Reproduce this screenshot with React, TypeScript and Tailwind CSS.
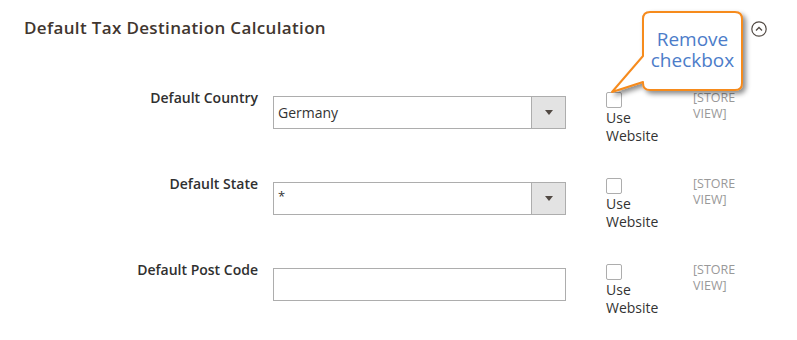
const rows = [
  { label: "Default Country", kind: "select", value: "Germany" },
  { label: "Default State", kind: "select", value: "*" },
  { label: "Default Post Code", kind: "input", value: "" },
];

const Dropdown = ({ value }: { value: string }) => (
  <div className="flex h-[33px] w-[293px] border border-[#adadad] bg-white">
    <div className="flex flex-1 items-center pl-[4px] text-[14px] text-[#333]">
      {value === "*" ? <span className="text-[13px] leading-none -mt-[4px]">*</span> : value}
    </div>
    <div className="flex w-[34px] items-center justify-center border-l border-[#adadad] bg-[#e3e3e3]">
      <svg width="8" height="5" viewBox="0 0 8 5">
        <path d="M0 0 H8 L4 5 Z" fill="#514943" />
      </svg>
    </div>
  </div>
);

const Callout = () => (
  <>
    <svg
      className="absolute left-0 top-0 pointer-events-none"
      width="797"
      height="120"
      viewBox="0 0 797 120"
    >
      <defs>
        <filter id="sh" x="-20%" y="-20%" width="150%" height="150%">
          <feDropShadow dx="3" dy="3" stdDeviation="2.5" floodColor="#000" floodOpacity="0.45" />
        </filter>
      </defs>
      <path
        d="M650 12 H735 Q742 12 742 19 V83 Q742 90 735 90 H650 Q643 90 643 83 V82 L612 92 L643 56 V19 Q643 12 650 12 Z"
        fill="#fff"
        stroke="#f68b1f"
        strokeWidth="2"
        strokeLinejoin="round"
        filter="url(#sh)"
      />
    </svg>
    <div className="absolute left-[643px] top-[29px] w-[99px] text-center text-[19px] leading-[21px] text-[#4c7cc9]">
      <div>Remove</div>
      <div>checkbox</div>
    </div>
  </>
);

export default function App() {
  return (
    <div className="relative h-[340px] w-[797px] bg-white font-['Open_Sans',sans-serif]">
      <div className="flex items-center justify-between pl-[24px] pr-[30px] pt-[16px]">
        <h2 className="text-[17px] font-semibold leading-[24px] tracking-[0.35px] text-[#41362f]">
          Default Tax Destination Calculation
        </h2>
        <svg width="16" height="16" viewBox="0 0 16 16" className="mt-[2px]">
          <circle cx="8" cy="8" r="7.2" fill="none" stroke="#514943" strokeWidth="1.2" />
          <path d="M5 9.5 L8 6.5 L11 9.5" fill="none" stroke="#514943" strokeWidth="1.3" />
        </svg>
      </div>

      <div className="mt-[48px] flex flex-col gap-[29px]">
        {rows.map((row) => (
          <div key={row.label} className="flex items-start">
            <label className="w-[258px] text-right text-[14px] font-semibold leading-[19px] text-[#303030]">
              {row.label}
            </label>
            <div className="ml-[15px] mt-[8px]">
              {row.kind === "select" ? (
                <Dropdown value={row.value} />
              ) : (
                <div className="h-[33px] w-[293px] border border-[#adadad] bg-white" />
              )}
            </div>
            <div className="ml-[40px] mt-[4px] w-[70px]">
              <div className="h-[16px] w-[16px] rounded-[2px] border border-[#adadad] bg-white" />
              <div className="mt-[1px] text-[14px] leading-[18px] text-[#333]">Use Website</div>
            </div>
            <div className="ml-[17px] mt-[2px] w-[50px] text-[12.5px] leading-[16px] text-[#999]">
              [STORE VIEW]
            </div>
          </div>
        ))}
      </div>

      <Callout />
    </div>
  );
}
